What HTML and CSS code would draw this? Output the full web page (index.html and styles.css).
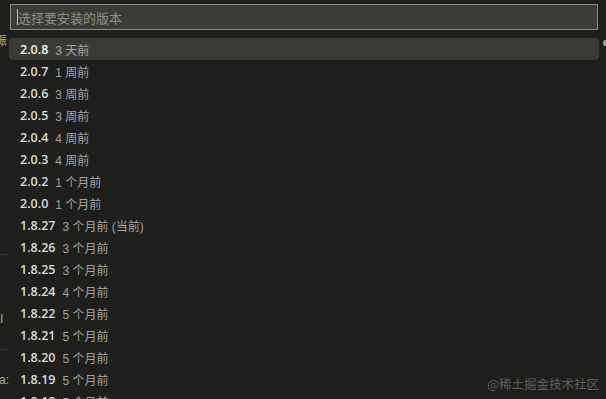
FILE: index.html
```html
<!DOCTYPE html>
<html lang="zh-CN">
<head>
    <meta charset="UTF-8">
    <meta name="viewport" content="width=device-width, initial-scale=1.0">
    <title>选择版本</title>
    <link rel="stylesheet" href="styles.css">
</head>
<body>
    <div class="editor">
        <!-- 后面编辑器露出的一小条 -->
        <div class="gutter">
            <span class="peek peek-top">振</span>
            <span class="rule rule-a"></span>
            <span class="peek peek-mid">I</span>
            <span class="rule rule-b"></span>
            <span class="peek peek-low">a:</span>
        </div>

        <div class="picker">
            <div class="input-box">
                <span class="caret"></span>
                <span class="placeholder">选择要安装的版本</span>
            </div>
            <ul class="list">
                <li class="item active"><span class="label">2.0.8</span><span class="desc">3 天前</span></li>
                <li class="item"><span class="label">2.0.7</span><span class="desc">1 周前</span></li>
                <li class="item"><span class="label">2.0.6</span><span class="desc">3 周前</span></li>
                <li class="item"><span class="label">2.0.5</span><span class="desc">3 周前</span></li>
                <li class="item"><span class="label">2.0.4</span><span class="desc">4 周前</span></li>
                <li class="item"><span class="label">2.0.3</span><span class="desc">4 周前</span></li>
                <li class="item"><span class="label">2.0.2</span><span class="desc">1 个月前</span></li>
                <li class="item"><span class="label">2.0.0</span><span class="desc">1 个月前</span></li>
                <li class="item"><span class="label">1.8.27</span><span class="desc">3 个月前 (当前)</span></li>
                <li class="item"><span class="label">1.8.26</span><span class="desc">3 个月前</span></li>
                <li class="item"><span class="label">1.8.25</span><span class="desc">3 个月前</span></li>
                <li class="item"><span class="label">1.8.24</span><span class="desc">4 个月前</span></li>
                <li class="item"><span class="label">1.8.22</span><span class="desc">5 个月前</span></li>
                <li class="item"><span class="label">1.8.21</span><span class="desc">5 个月前</span></li>
                <li class="item"><span class="label">1.8.20</span><span class="desc">5 个月前</span></li>
                <li class="item"><span class="label">1.8.19</span><span class="desc">5 个月前</span></li>
                <li class="item"><span class="label">1.8.18</span><span class="desc">5 个月前</span></li>
            </ul>
        </div>

        <div class="edge">
            <span class="dot"></span>
        </div>
    </div>

    <div class="watermark">@稀土掘金技术社区</div>
</body>
</html>
```

FILE: styles.css
```css
* {
    box-sizing: border-box;
}
html, body {
    height: 100%;
}
body {
    margin: 0;
    background-color: #1e1e1c;
    font-family: "Liberation Sans", Arial, "Noto Sans CJK SC", sans-serif;
    color: #d8d8d6;
    overflow: hidden;
    position: relative;
}
.editor {
    display: flex;
    height: 100%;
}

/* 左侧露出的编辑器 */
.gutter {
    width: 9px;
    flex-shrink: 0;
    overflow: hidden;
    display: flex;
    flex-direction: column;
}
.peek {
    font-family: "Noto Sans CJK SC", sans-serif;
    font-size: 12px;
    color: #a8a8a4;
    line-height: 14px;
    margin-left: -5px;
    white-space: nowrap;
}
.peek-top {
    margin-top: 33px;
}
.rule {
    display: block;
    height: 1px;
    width: 8px;
    background-color: #34342f;
    flex-shrink: 0;
}
.rule-a {
    margin-top: 207px;
}
.peek-mid {
    margin-top: 56px;
    margin-left: 0;
}
.rule-b {
    margin-top: 24px;
}
.peek-low {
    margin-top: 23px;
    margin-left: -1px;
    font-family: "Liberation Sans", sans-serif;
}

/* 快速选择面板 */
.picker {
    flex: 1;
    padding-top: 4px;
    display: flex;
    flex-direction: column;
    min-width: 0;
    overflow: hidden;
}
.input-box {
    flex-shrink: 0;
    height: 26px;
    margin: 0 1px 8px 1px;
    background-color: #3b3b35;
    border: 1px solid #8c8c84;
    display: flex;
    align-items: center;
    padding-left: 6px;
}
.caret {
    width: 1px;
    height: 16px;
    background-color: #c8c8c2;
}
.placeholder {
    font-family: "Noto Sans CJK SC", sans-serif;
    font-size: 13px;
    color: #8e8e88;
}
.list {
    list-style: none;
    margin: 0;
    padding: 0;
    flex-shrink: 0;
}
.item {
    height: 22px;
    display: flex;
    align-items: center;
    padding-left: 11px;
    border-radius: 4px;
    white-space: nowrap;
}
.item.active {
    background-color: #3a3a34;
}
.label {
    font-family: "Open Sans", "Liberation Sans", sans-serif;
    font-size: 12.5px;
    font-weight: 600;
    color: #dcdcda;
}
.item.active .label {
    color: #f4f4f2;
}
.desc {
    font-family: "Liberation Sans", "Noto Sans CJK SC", sans-serif;
    font-size: 12px;
    color: #a2a2a0;
    margin-left: 7px;
}

/* 右侧边缘 */
.edge {
    width: 7px;
    flex-shrink: 0;
    display: flex;
    flex-direction: column;
    align-items: flex-end;
}
.dot {
    width: 3px;
    height: 6px;
    margin-top: 40px;
    border-radius: 2px 0 0 2px;
    background-color: #9a9a94;
}

.watermark {
    position: absolute;
    right: 7px;
    bottom: 6px;
    font-family: "Noto Sans CJK SC", sans-serif;
    font-size: 12.5px;
    color: #5e5e5a;
}
```
